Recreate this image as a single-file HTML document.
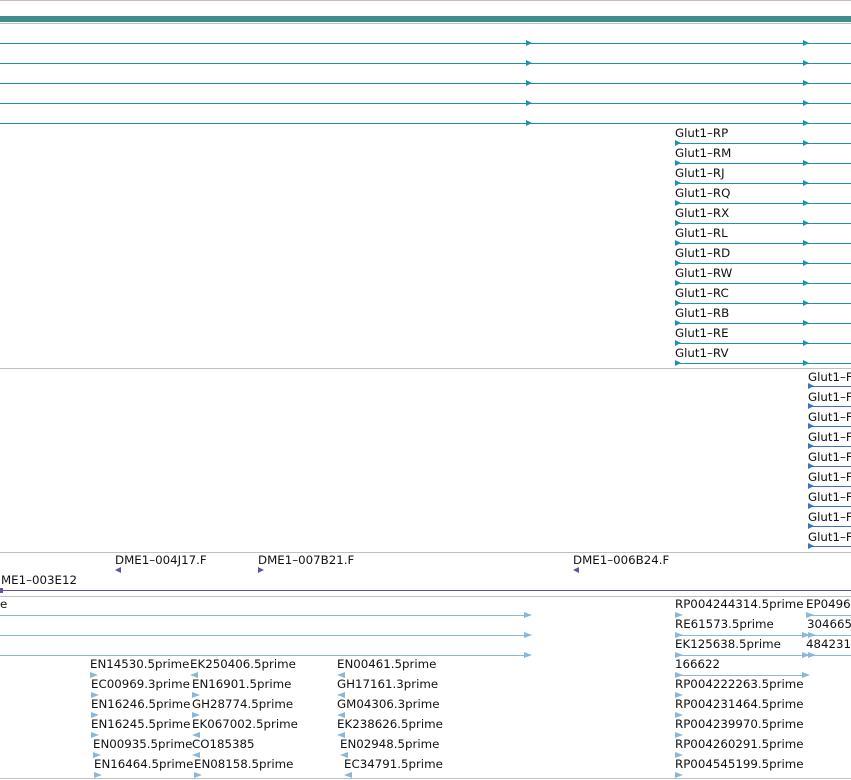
<!DOCTYPE html>
<html><head><meta charset="utf-8"><style>
html,body{margin:0;padding:0;background:#fff;}
svg{display:block;font-family:"DejaVu Sans","Liberation Sans",sans-serif;font-size:11.8px;}
text{fill:#111;}
</style></head><body>
<svg width="851" height="780" viewBox="0 0 851 780" xmlns="http://www.w3.org/2000/svg">
<defs>
<path id="ta" d="M0,-3 L6,0 L0,3 Z" fill="#1a93b0"/>
<path id="ba" d="M0,-3 L6,0 L0,3 Z" fill="#3a6fd0"/>
<path id="la" d="M0,-3 L8,0 L0,3 Z" fill="#8ab8dc"/>
<path id="lal" d="M8,-3 L0,0 L8,3 Z" fill="#8ab8dc"/>
</defs>
<line x1="0" y1="0.5" x2="851" y2="0.5" stroke="#c0c0c0"/>
<rect x="0" y="16" width="851" height="6" fill="#3f8f91"/>
<line x1="0" y1="23.5" x2="851" y2="23.5" stroke="#c0c0c0"/>
<g stroke="#1a93b0" stroke-width="1">
<line x1="0" y1="43.5" x2="851" y2="43.5"/><line x1="0" y1="63.5" x2="851" y2="63.5"/><line x1="0" y1="83.5" x2="851" y2="83.5"/><line x1="0" y1="103.5" x2="851" y2="103.5"/><line x1="0" y1="123.5" x2="851" y2="123.5"/>
</g>
<use href="#ta" x="526" y="43"/><use href="#ta" x="803" y="43"/>
<use href="#ta" x="526" y="63"/><use href="#ta" x="803" y="63"/>
<use href="#ta" x="526" y="83"/><use href="#ta" x="803" y="83"/>
<use href="#ta" x="526" y="103"/><use href="#ta" x="803" y="103"/>
<use href="#ta" x="526" y="123"/><use href="#ta" x="803" y="123"/>

<g>
<text x="675" y="137">Glut1–RP</text><text x="675" y="157">Glut1–RM</text><text x="675" y="177">Glut1–RJ</text><text x="675" y="197">Glut1–RQ</text><text x="675" y="217">Glut1–RX</text><text x="675" y="237">Glut1–RL</text><text x="675" y="257">Glut1–RD</text><text x="675" y="277">Glut1–RW</text><text x="675" y="297">Glut1–RC</text><text x="675" y="317">Glut1–RB</text><text x="675" y="337">Glut1–RE</text><text x="675" y="357">Glut1–RV</text>
</g>
<g stroke="#1a93b0">
<line x1="675" y1="143.5" x2="851" y2="143.5"/><line x1="675" y1="163.5" x2="851" y2="163.5"/><line x1="675" y1="183.5" x2="851" y2="183.5"/><line x1="675" y1="203.5" x2="851" y2="203.5"/><line x1="675" y1="223.5" x2="851" y2="223.5"/><line x1="675" y1="243.5" x2="851" y2="243.5"/><line x1="675" y1="263.5" x2="851" y2="263.5"/><line x1="675" y1="283.5" x2="851" y2="283.5"/><line x1="675" y1="303.5" x2="851" y2="303.5"/><line x1="675" y1="323.5" x2="851" y2="323.5"/><line x1="675" y1="343.5" x2="851" y2="343.5"/><line x1="675" y1="363.5" x2="851" y2="363.5"/>
</g>
<use href="#ta" x="675" y="143"/><use href="#ta" x="803" y="143"/>
<use href="#ta" x="675" y="163"/><use href="#ta" x="803" y="163"/>
<use href="#ta" x="675" y="183"/><use href="#ta" x="803" y="183"/>
<use href="#ta" x="675" y="203"/><use href="#ta" x="803" y="203"/>
<use href="#ta" x="675" y="223"/><use href="#ta" x="803" y="223"/>
<use href="#ta" x="675" y="243"/><use href="#ta" x="803" y="243"/>
<use href="#ta" x="675" y="263"/><use href="#ta" x="803" y="263"/>
<use href="#ta" x="675" y="283"/><use href="#ta" x="803" y="283"/>
<use href="#ta" x="675" y="303"/><use href="#ta" x="803" y="303"/>
<use href="#ta" x="675" y="323"/><use href="#ta" x="803" y="323"/>
<use href="#ta" x="675" y="343"/><use href="#ta" x="803" y="343"/>
<use href="#ta" x="675" y="363"/><use href="#ta" x="803" y="363"/>
<line x1="0" y1="368.5" x2="851" y2="368.5" stroke="#c0c0c0"/>

<g>
<text x="808" y="381">Glut1–F</text><text x="808" y="401">Glut1–F</text><text x="808" y="421">Glut1–F</text><text x="808" y="441">Glut1–F</text><text x="808" y="461">Glut1–F</text><text x="808" y="481">Glut1–F</text><text x="808" y="501">Glut1–F</text><text x="808" y="521">Glut1–F</text><text x="808" y="541">Glut1–F</text>
</g>
<g stroke="#3a6fd0">
<line x1="808" y1="386.5" x2="851" y2="386.5"/><line x1="808" y1="406.5" x2="851" y2="406.5"/><line x1="808" y1="426.5" x2="851" y2="426.5"/><line x1="808" y1="446.5" x2="851" y2="446.5"/><line x1="808" y1="466.5" x2="851" y2="466.5"/><line x1="808" y1="486.5" x2="851" y2="486.5"/><line x1="808" y1="506.5" x2="851" y2="506.5"/><line x1="808" y1="526.5" x2="851" y2="526.5"/><line x1="808" y1="546.5" x2="851" y2="546.5"/>
</g>
<use href="#ba" x="808" y="386"/><use href="#ba" x="808" y="406"/><use href="#ba" x="808" y="426"/><use href="#ba" x="808" y="446"/><use href="#ba" x="808" y="466"/><use href="#ba" x="808" y="486"/><use href="#ba" x="808" y="506"/><use href="#ba" x="808" y="526"/><use href="#ba" x="808" y="546"/>
<line x1="0" y1="552.5" x2="851" y2="552.5" stroke="#c0c0c0"/>

<text x="115" y="564">DME1–004J17.F</text>
<path d="M121,567 L115,570 L121,573 Z" fill="#6a50a0"/>
<text x="258" y="564">DME1–007B21.F</text>
<path d="M258,567 L264,570 L258,573 Z" fill="#6a50a0"/>
<text x="573" y="564">DME1–006B24.F</text>
<path d="M579,567 L573,570 L579,573 Z" fill="#6a50a0"/>
<text x="1" y="584">ME1–003E12</text>
<line x1="0" y1="590.5" x2="851" y2="590.5" stroke="#6a50a0"/>
<rect x="0" y="588" width="3" height="5" fill="#6a50a0"/>
<line x1="0" y1="596.5" x2="851" y2="596.5" stroke="#c0c0c0"/>

<text x="0" y="608">e</text>
<g stroke="#8ab8dc">
<line x1="0" y1="615.5" x2="530" y2="615.5"/><line x1="0" y1="635.5" x2="530" y2="635.5"/><line x1="0" y1="655.5" x2="530" y2="655.5"/>
<line x1="806" y1="615.5" x2="851" y2="615.5"/><line x1="675" y1="635.5" x2="851" y2="635.5"/><line x1="675" y1="655.5" x2="851" y2="655.5"/><line x1="675" y1="675.5" x2="808" y2="675.5"/>
</g>
<use href="#la" x="524" y="615"/><use href="#la" x="524" y="635"/><use href="#la" x="524" y="655"/>

<text x="90" y="668">EN14530.5prime</text><text x="91" y="688">EC00969.3prime</text><text x="91" y="708">EN16246.5prime</text><text x="91" y="728">EN16245.5prime</text><text x="93" y="748">EN00935.5prime</text><text x="94" y="768">EN16464.5prime</text>
<use href="#la" x="90" y="675"/><use href="#la" x="91" y="695"/><use href="#la" x="91" y="715"/><use href="#la" x="91" y="735"/><use href="#la" x="93" y="755"/><use href="#la" x="94" y="775"/>
<text x="190" y="668">EK250406.5prime</text><text x="192" y="688">EN16901.5prime</text><text x="192" y="708">GH28774.5prime</text><text x="192" y="728">EK067002.5prime</text><text x="192" y="748">CO185385</text><text x="194" y="768">EN08158.5prime</text>
<use href="#lal" x="190" y="675"/><use href="#la" x="192" y="695"/><use href="#la" x="192" y="715"/><use href="#lal" x="192" y="735"/><use href="#lal" x="192" y="755"/><use href="#la" x="194" y="775"/>
<text x="337" y="668">EN00461.5prime</text><text x="337" y="688">GH17161.3prime</text><text x="337" y="708">GM04306.3prime</text><text x="337" y="728">EK238626.5prime</text><text x="340" y="748">EN02948.5prime</text><text x="344" y="768">EC34791.5prime</text>
<use href="#lal" x="337" y="675"/><use href="#lal" x="337" y="695"/><use href="#lal" x="337" y="715"/><use href="#lal" x="337" y="735"/><use href="#lal" x="340" y="755"/><use href="#lal" x="344" y="775"/>

<text x="675" y="608">RP004244314.5prime</text><text x="675" y="628">RE61573.5prime</text><text x="675" y="648">EK125638.5prime</text><text x="675" y="668">166622</text><text x="675" y="688">RP004222263.5prime</text><text x="675" y="708">RP004231464.5prime</text><text x="675" y="728">RP004239970.5prime</text><text x="675" y="748">RP004260291.5prime</text><text x="675" y="768">RP004545199.5prime</text>
<use href="#la" x="675" y="615"/><use href="#la" x="675" y="635"/><use href="#la" x="675" y="655"/><use href="#la" x="675" y="675"/><use href="#la" x="675" y="695"/><use href="#la" x="675" y="715"/><use href="#la" x="675" y="735"/><use href="#la" x="675" y="755"/><use href="#la" x="675" y="775"/>
<use href="#la" x="802" y="635"/><use href="#la" x="802" y="655"/><use href="#la" x="802" y="675"/>
<text x="806" y="608">EP0496</text><text x="807" y="628">304665</text><text x="806" y="648">484231</text>
<use href="#la" x="806" y="615"/><use href="#la" x="808" y="635"/><use href="#la" x="808" y="655"/>
<line x1="0" y1="778.5" x2="851" y2="778.5" stroke="#c0c0c0"/>
</svg>
</body></html>
